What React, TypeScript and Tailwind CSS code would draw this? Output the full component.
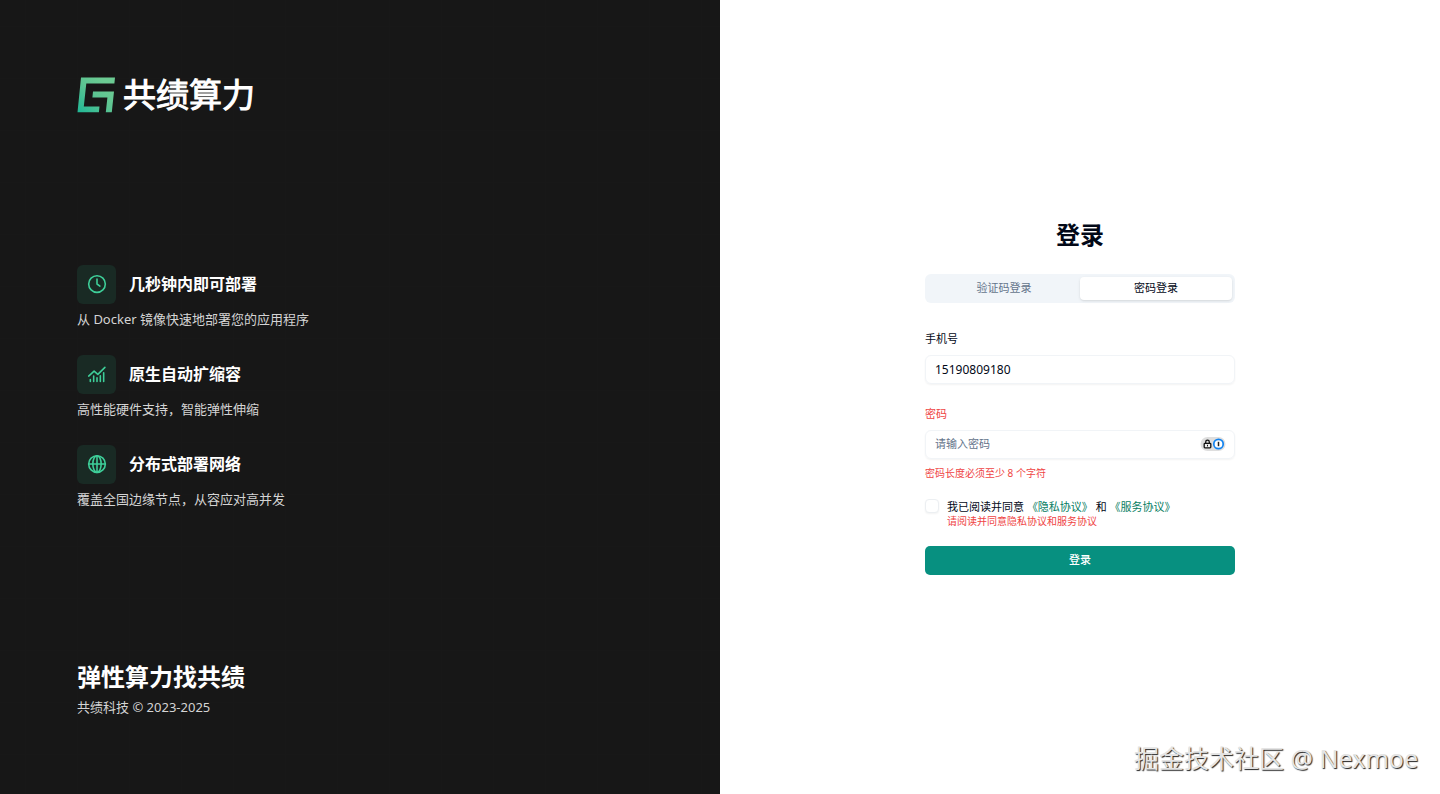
import React from "react";

const features = [
  { icon: ClockIcon, title: "几秒钟内即可部署", text: "从 Docker 镜像快速地部署您的应用程序" },
  { icon: GrowthIcon, title: "原生自动扩缩容", text: "高性能硬件支持，智能弹性伸缩" },
  { icon: GlobeIcon, title: "分布式部署网络", text: "覆盖全国边缘节点，从容应对高并发" },
];

function IconBase({ children }: { children: React.ReactNode }) {
  return (
    <svg
      viewBox="0 0 24 24"
      className="size-5"
      fill="none"
      stroke="currentColor"
      strokeWidth="1.9"
      strokeLinecap="round"
      strokeLinejoin="round"
      aria-hidden="true"
    >
      {children}
    </svg>
  );
}

function ClockIcon() {
  return (
    <IconBase>
      <circle cx="12" cy="12" r="10" />
      <path d="M12 6v6l3.5 2.5" />
    </IconBase>
  );
}

function GrowthIcon() {
  return (
    <IconBase>
      <path d="M2 14.500 8.500 8.500l4.500 4L21.500 4" />
      <path d="M4 18.500V21M8 14.500V21M12 16.500V21M16 14V21M20 10.500V21" />
    </IconBase>
  );
}

function GlobeIcon() {
  return (
    <IconBase>
      <circle cx="12" cy="12" r="10" />
      <ellipse cx="12" cy="12" rx="5" ry="10" />
      <path d="M2 12h20M12 2v20" />
    </IconBase>
  );
}

function Logo() {
  return (
    <div className="flex h-9 items-center gap-2">
      <svg viewBox="0 0 38 36" className="h-9 w-[38px]" aria-hidden="true">
        <defs>
          <linearGradient id="mark" x1="0" y1="1" x2="0.8" y2="0.2">
            <stop offset="0" stopColor="#1fb796" />
            <stop offset="0.6" stopColor="#5cc492" />
            <stop offset="1" stopColor="#6ccb93" />
          </linearGradient>
        </defs>
        <path
          fill="url(#mark)"
          d="M4 0.500H38L37.400 6.500H9.300L6.800 29.500H22.500L21.900 35.300H0.500ZM16 14.500H37L34.800 35.300H28.800L30.400 20.500H15.400Z"
        />
      </svg>
      <span className="text-[33px] leading-9 whitespace-nowrap text-white [-webkit-text-stroke:1px_white]">
        共绩算力
      </span>
    </div>
  );
}

function PasswordBadge() {
  return (
    <svg viewBox="0 0 26 16" className="h-4 w-[26px]" aria-hidden="true">
      <rect x="0.500" y="1" width="25" height="14" rx="7" fill="#dedede" />
      <path d="M5.700 7.500V6a1.800 1.800 0 0 1 3.600 0v1.500" fill="none" stroke="#111" strokeWidth="1.300" />
      <rect x="4.200" y="7.300" width="6.600" height="4.600" rx="0.800" fill="#eee" stroke="#111" strokeWidth="1.300" />
      <path d="M7.500 8.800v1.600" stroke="#111" strokeWidth="1" />
      <circle cx="18.500" cy="8" r="4.700" fill="#fff" stroke="#1283f0" strokeWidth="1.700" />
      <path d="M18.500 5.800v4.400" stroke="#222" strokeWidth="1.500" />
    </svg>
  );
}

export default function App() {
  return (
    <div className="relative grid min-h-screen grid-cols-2 bg-white font-['Noto_Sans','Noto_Sans_CJK_SC',sans-serif] text-[#020817]">
      <aside className="flex flex-col justify-between bg-[#171717] bg-[linear-gradient(to_right,#181818_1px,transparent_1px),linear-gradient(to_bottom,#181818_1px,transparent_1px)] bg-size-[52px_52px] bg-position-[25px_26px] p-[77px]">
        <Logo />
        <ul className="flex flex-col gap-[26px]">
          {features.map(({ icon: Icon, title, text }) => (
            <li key={title} className="flex flex-col gap-[5px]">
              <div className="flex items-center gap-[13px]">
                <span className="flex size-[39px] items-center justify-center rounded-md bg-[#192a24] text-[#3ecf99]">
                  <Icon />
                </span>
                <h2 className="text-base leading-6 font-bold text-white">{title}</h2>
              </div>
              <p className="text-[13px] leading-5 text-[#d4d4d4]">{text}</p>
            </li>
          ))}
        </ul>
        <div className="flex flex-col gap-[3px]">
          <p className="text-2xl leading-[34px] font-bold text-white">弹性算力找共绩</p>
          <p className="text-[13px] leading-5 text-[#d4d4d4]">共绩科技 © 2023-2025</p>
        </div>
      </aside>

      <main className="flex flex-col items-center justify-center">
        <form className="w-[310px] text-[11px]" onSubmit={(e) => e.preventDefault()}>
          <h1 className="text-center text-2xl leading-[30px] font-bold">登录</h1>

          <div role="tablist" className="mt-6 grid h-[29px] grid-cols-2 rounded-md bg-[#f1f5f9] p-[3px]">
            <button type="button" role="tab" aria-selected="false" className="rounded text-[#64748b]">
              验证码登录
            </button>
            <button type="button" role="tab" aria-selected="true" className="rounded bg-white shadow-sm">
              密码登录
            </button>
          </div>

          <label htmlFor="phone" className="mt-[26px] block leading-5">
            手机号
          </label>
          <input
            id="phone"
            type="tel"
            defaultValue="15190809180"
            className="mt-1.5 h-[29px] w-full rounded-md border border-[#f1f4f7] px-[9px] text-xs shadow-xs outline-none"
          />

          <label htmlFor="password" className="mt-5 block leading-5 text-[#ef4444]">
            密码
          </label>
          <div className="mt-1.5 flex h-[29px] items-center rounded-md border border-[#f1f4f7] pr-2 pl-[9px] shadow-xs">
            <input
              id="password"
              type="password"
              placeholder="请输入密码"
              className="min-w-0 flex-1 outline-none placeholder:text-[#64748b]"
            />
            <PasswordBadge />
          </div>
          <p className="mt-1 text-[10px] leading-5 text-[#ef4444]">密码长度必须至少 8 个字符</p>

          <div className="mt-4 flex gap-2">
            <input
              id="agree"
              type="checkbox"
              className="size-3.5 appearance-none rounded border border-[#eceff2] bg-white shadow-xs"
            />
            <div>
              <label htmlFor="agree" className="block leading-4">
                {"我已阅读并同意 "}
                <a href="#privacy" className="text-[#067d62]">《隐私协议》</a>
                {" 和 "}
                <a href="#service" className="text-[#067d62]">《服务协议》</a>
              </label>
              <p className="text-[10px] leading-3 text-[#ef4444]">请阅读并同意隐私协议和服务协议</p>
            </div>
          </div>

          <button type="submit" className="mt-[19px] h-[29px] w-full rounded-[5px] bg-[#079080] font-medium text-white">
            登录
          </button>
        </form>
      </main>

      <p className="absolute right-[22px] bottom-5 text-[25px] leading-8 text-[#e4e4e4] [text-shadow:1px_1px_1px_#222]">
        掘金技术社区 @ Nexmoe
      </p>
    </div>
  );
}
